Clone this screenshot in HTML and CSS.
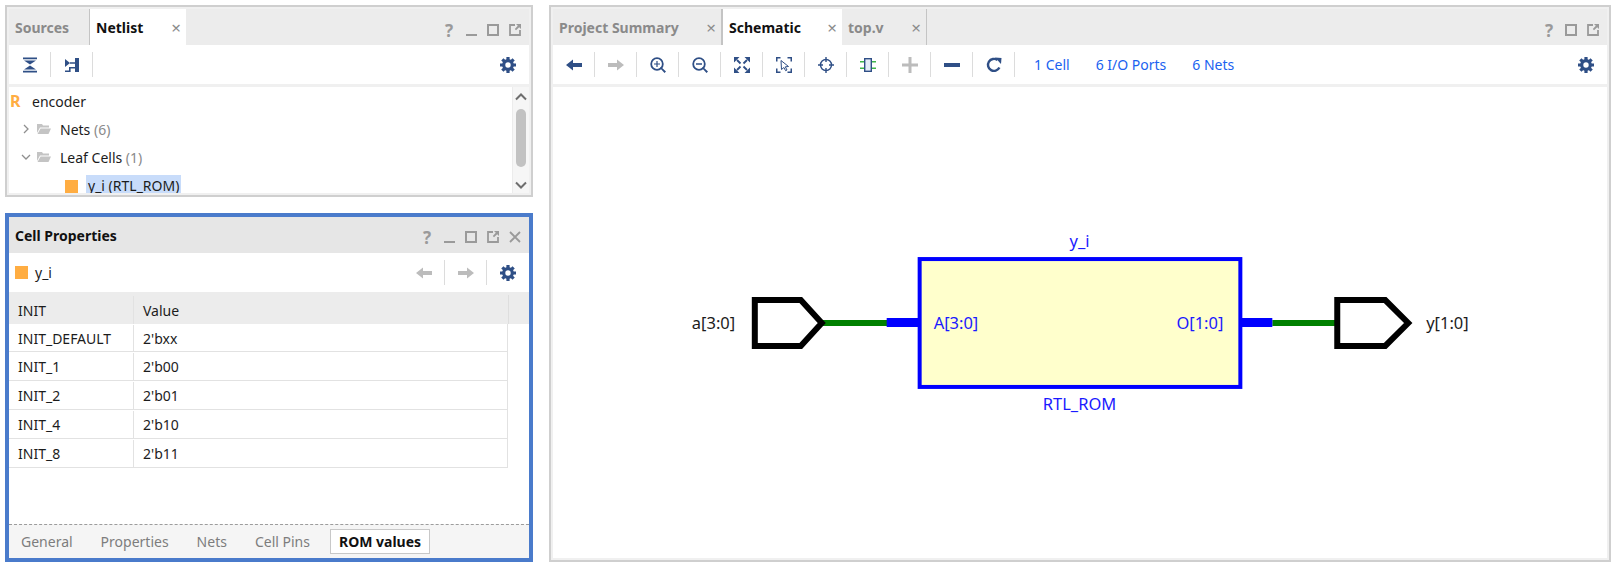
FILE: index.html
```html
<!DOCTYPE html>
<html lang="en">
<head>
    <meta charset="UTF-8">
    <title>Schematic</title>
    <link rel="stylesheet" href="styles.css">
</head>
<body>

    <svg class="defs">
        <symbol id="i-collapse" viewBox="0 0 16 16">
            <path d="M1 0.500h14v1.800H1zM2 3.400h12L8 7.600zM8 8.400l6 4.200H2zM1 13.700h14v1.800H1z"/>
        </symbol>
        <symbol id="i-connect" viewBox="0 0 16 16">
            <path d="M1 2l5 4-5 4zM11 1h4v14h-4zM6 5.200h5v1.600H6zM5 10h6v1.600H6.600V15H1v-1.600h4z"/>
        </symbol>
        <symbol id="i-gear" viewBox="0 0 16 16">
            <circle cx="8" cy="8" r="4.300" fill="none" stroke="currentColor" stroke-width="3.200"/>
            <path d="M6.400 0h3.200v3H6.400zM6.400 13h3.200v3H6.400zM0 6.400h3v3.200H0zM13 6.400h3v3.200h-3z"/>
            <path d="M6.400 0h3.200v3H6.400zM6.400 13h3.200v3H6.400zM0 6.400h3v3.200H0zM13 6.400h3v3.200h-3z" transform="rotate(45 8 8)"/>
        </symbol>
        <symbol id="i-back" viewBox="0 0 16 16">
            <path d="M0 8l7-5.500V6h9v4H7v3.500z"/>
        </symbol>
        <symbol id="i-forward" viewBox="0 0 16 16">
            <path d="M16 8L9 2.500V6H0v4h9v3.500z"/>
        </symbol>
        <symbol id="i-zoomin" viewBox="0 0 16 16">
            <circle cx="7" cy="7" r="5.800" fill="none" stroke="currentColor" stroke-width="1.800"/>
            <path d="M4 6.400h6v1.200H4zM6.400 4h1.200v6H6.400zM11 10l5 4.500-1.500 1.500-4.500-5z"/>
        </symbol>
        <symbol id="i-zoomout" viewBox="0 0 16 16">
            <circle cx="7" cy="7" r="5.800" fill="none" stroke="currentColor" stroke-width="1.800"/>
            <path d="M4 6.200h6v1.500H4zM11 10l5 4.500-1.500 1.500-4.500-5z"/>
        </symbol>
        <symbol id="i-fit" viewBox="0 0 16 16">
            <path d="M0 0h5.500L0 5.500zM16 0v5.500L10.500 0zM0 16v-5.500L5.500 16zM16 16h-5.500L16 10.500z"/>
            <path d="M3 3l3.500 3.500M13 3L9.500 6.500M3 13l3.500-3.500M13 13L9.500 9.500" fill="none" stroke="currentColor" stroke-width="1.800"/>
        </symbol>
        <symbol id="i-select" viewBox="0 0 16 16">
            <path d="M0 0h4.500v1.500h-3v3H0zM11.500 0H16v4.500h-1.500v-3h-3zM0 11.500h1.500v3h3V16H0zM14.500 11.500H16V16h-4.500v-1.500h3z"/>
            <path d="M5 3.500l7.500 6-3.200.300 1.700 3.200-1.400.700-1.700-3.200L5.500 12.500z" fill="#fff" stroke="currentColor" stroke-width="1"/>
        </symbol>
        <symbol id="i-target" viewBox="0 0 16 16">
            <circle cx="8" cy="8" r="5.500" fill="none" stroke="currentColor" stroke-width="1.400"/>
            <path d="M7.300 0h1.400v5H7.300zM7.300 11h1.400v5H7.300zM0 7.300h5v1.400H0zM11 7.300h5v1.400h-5z"/>
        </symbol>
        <symbol id="i-cell" viewBox="0 0 16 16">
            <path d="M0 4h4v1.500H0zM0 10.500h4V12H0zM12 4h4v1.500h-4zM12 10.500h4V12h-4z" fill="#3fb54a"/>
            <rect x="4.700" y="1.700" width="6.600" height="12.600" fill="#e4ecf7" stroke="currentColor" stroke-width="1.400"/>
        </symbol>
        <symbol id="i-plus" viewBox="0 0 16 16">
            <path d="M6.500 0h3v6.500H16v3H9.500V16h-3V9.500H0v-3h6.500z"/>
        </symbol>
        <symbol id="i-minus" viewBox="0 0 16 16">
            <path d="M0 6h16v4H0z"/>
        </symbol>
        <symbol id="i-refresh" viewBox="0 0 16 16">
            <path d="M13.400 10.500A6 6 0 1 1 11.500 3" fill="none" stroke="currentColor" stroke-width="2.400"/>
            <path d="M9 0.500l6.500 0.500-0.500 6z"/>
        </symbol>
        <symbol id="i-folder" viewBox="0 0 14 12">
            <path d="M0 1h5l1 1.500h6v2H3L0 10z"/>
            <path d="M3.500 5.500H14L11.500 11H0.500z"/>
        </symbol>
        <symbol id="i-max" viewBox="0 0 12 12">
            <rect x="1" y="1" width="10" height="10" fill="none" stroke="currentColor" stroke-width="2"/>
        </symbol>
        <symbol id="i-float" viewBox="0 0 12 12">
            <path d="M6 1H1v10h10V6" fill="none" stroke="currentColor" stroke-width="1.800"/>
            <path d="M7 0h5v5l-1.800-1.800L7 6.200 5.800 5l3-3.200z"/>
        </symbol>
    </svg>

    <div class="page">
        <div class="left-col">

            <div class="panel panel-netlist">
                <div class="panel-head">
                    <div class="tab tab-sources"><span>Sources</span></div>
                    <div class="tab tab-active tab-netlist"><span>Netlist</span><span class="close">&times;</span></div>
                    <div class="win-btns">
                        <span class="win-btn help">?</span>
                        <span class="win-btn"><i class="min-bar"></i></span>
                        <span class="win-btn"><svg class="win-icon"><use href="#i-max"/></svg></span>
                        <span class="win-btn"><svg class="win-icon"><use href="#i-float"/></svg></span>
                    </div>
                </div>
                <div class="toolbar">
                    <span class="tool sep"><svg class="icon"><use href="#i-collapse"/></svg></span>
                    <span class="tool sep"><svg class="icon"><use href="#i-connect"/></svg></span>
                    <span class="tool tool-end"><svg class="icon"><use href="#i-gear"/></svg></span>
                </div>
                <div class="tree-wrap">
                    <div class="tree">
                        <div class="tree-row"><span class="r-mark">R</span><span>encoder</span></div>
                        <div class="tree-row lvl1">
                            <svg class="chev" viewBox="0 0 10 10"><path d="M3 1l4 4-4 4"/></svg>
                            <svg class="folder"><use href="#i-folder"/></svg>
                            <span>Nets <em>(6)</em></span>
                        </div>
                        <div class="tree-row lvl1">
                            <svg class="chev" viewBox="0 0 10 10"><path d="M1 3l4 4 4-4"/></svg>
                            <svg class="folder"><use href="#i-folder"/></svg>
                            <span>Leaf Cells <em>(1)</em></span>
                        </div>
                        <div class="tree-row lvl2">
                            <i class="cell-mark"></i>
                            <span class="selected">y_i (RTL_ROM)</span>
                        </div>
                    </div>
                    <div class="scrollbar">
                        <svg class="sb-arrow" viewBox="0 0 12 8"><path d="M1 6.500l5-5 5 5"/></svg>
                        <div class="sb-thumb"></div>
                        <svg class="sb-arrow sb-down" viewBox="0 0 12 8"><path d="M1 1.500l5 5 5-5"/></svg>
                    </div>
                </div>
            </div>

            <div class="panel-props">
                <div class="panel-head props-head">
                    <span class="props-title">Cell Properties</span>
                    <div class="win-btns">
                        <span class="win-btn help">?</span>
                        <span class="win-btn"><i class="min-bar"></i></span>
                        <span class="win-btn"><svg class="win-icon"><use href="#i-max"/></svg></span>
                        <span class="win-btn"><svg class="win-icon"><use href="#i-float"/></svg></span>
                        <span class="win-btn"><svg class="win-icon" viewBox="0 0 12 12"><path class="x-line" d="M1 1l10 10M11 1L1 11"/></svg></span>
                    </div>
                </div>
                <div class="toolbar props-bar">
                    <i class="cell-mark"></i>
                    <span class="props-name">y_i</span>
                    <span class="tool sep off tool-end"><svg class="icon"><use href="#i-back"/></svg></span>
                    <span class="tool sep off"><svg class="icon"><use href="#i-forward"/></svg></span>
                    <span class="tool"><svg class="icon"><use href="#i-gear"/></svg></span>
                </div>
                <div class="table">
                    <div class="tr th"><span class="td td-name">INIT</span><span class="td">Value</span></div>
                    <div class="tr tr-first"><span class="td td-name">INIT_DEFAULT</span><span class="td">2'bxx</span></div>
                    <div class="tr"><span class="td td-name">INIT_1</span><span class="td">2'b00</span></div>
                    <div class="tr"><span class="td td-name">INIT_2</span><span class="td">2'b01</span></div>
                    <div class="tr"><span class="td td-name">INIT_4</span><span class="td">2'b10</span></div>
                    <div class="tr"><span class="td td-name">INIT_8</span><span class="td">2'b11</span></div>
                </div>
                <div class="bottom-tabs">
                    <span class="btab">General</span>
                    <span class="btab">Properties</span>
                    <span class="btab">Nets</span>
                    <span class="btab">Cell Pins</span>
                    <span class="btab btab-active">ROM values</span>
                </div>
            </div>

        </div>

        <div class="panel panel-schematic">
            <div class="panel-head">
                <div class="tab tab-summary"><span>Project Summary</span><span class="close">&times;</span></div>
                <div class="tab tab-active tab-schematic"><span>Schematic</span><span class="close">&times;</span></div>
                <div class="tab tab-top"><span>top.v</span><span class="close">&times;</span></div>
                <div class="win-btns">
                    <span class="win-btn help">?</span>
                    <span class="win-btn"><svg class="win-icon"><use href="#i-max"/></svg></span>
                    <span class="win-btn"><svg class="win-icon"><use href="#i-float"/></svg></span>
                </div>
            </div>
            <div class="toolbar">
                <span class="tool sep"><svg class="icon"><use href="#i-back"/></svg></span>
                <span class="tool sep off"><svg class="icon"><use href="#i-forward"/></svg></span>
                <span class="tool sep"><svg class="icon"><use href="#i-zoomin"/></svg></span>
                <span class="tool sep"><svg class="icon"><use href="#i-zoomout"/></svg></span>
                <span class="tool sep"><svg class="icon"><use href="#i-fit"/></svg></span>
                <span class="tool sep"><svg class="icon"><use href="#i-select"/></svg></span>
                <span class="tool sep"><svg class="icon"><use href="#i-target"/></svg></span>
                <span class="tool sep"><svg class="icon"><use href="#i-cell"/></svg></span>
                <span class="tool sep off"><svg class="icon"><use href="#i-plus"/></svg></span>
                <span class="tool sep"><svg class="icon"><use href="#i-minus"/></svg></span>
                <span class="tool sep"><svg class="icon"><use href="#i-refresh"/></svg></span>
                <div class="links">
                    <a class="link">1 Cell</a>
                    <a class="link">6 I/O Ports</a>
                    <a class="link">6 Nets</a>
                </div>
                <span class="tool tool-end"><svg class="icon"><use href="#i-gear"/></svg></span>
            </div>
            <div class="canvas">
                <svg class="schematic" viewBox="553 87 1055 471">
                    <rect class="cell-box" x="920" y="259" width="321" height="128"/>
                    <rect class="wire" x="823" y="320" width="65" height="6"/>
                    <rect class="wire" x="1273" y="320" width="65" height="6"/>
                    <rect class="stub" x="887" y="318" width="32" height="9"/>
                    <rect class="stub" x="1240" y="318" width="33" height="9"/>
                    <path class="port" d="M755 300H801L822 323L801 346H755Z"/>
                    <path class="port" d="M1338 300H1386L1409 323L1386 346H1338Z"/>
                    <text class="net-label" x="692" y="329">a[3:0]</text>
                    <text class="net-label" x="1427" y="329">y[1:0]</text>
                    <text class="pin-label" x="934" y="329">A[3:0]</text>
                    <text class="pin-label" x="1224" y="329" text-anchor="end">O[1:0]</text>
                    <text class="pin-label" x="1080" y="247" text-anchor="middle">y_i</text>
                    <text class="pin-label" x="1080" y="410" text-anchor="middle">RTL_ROM</text>
                </svg>
            </div>
        </div>
    </div>

</body>
</html>
```

FILE: styles.css
```css
* {
    box-sizing: border-box;
}
html, body {
    margin: 0;
    height: 100%;
}
body {
    font-family: "Noto Sans", "Open Sans", sans-serif;
    font-size: 14px;
    color: #1c1c1c;
    background: #fff;
    overflow: hidden;
}
.defs {
    display: none;
}
.page {
    display: flex;
    gap: 16px;
    padding: 5px 9px 7px 5px;
    height: 569px;
}
.left-col {
    display: flex;
    flex-direction: column;
    gap: 16px;
    width: 528px;
}

/* panels */
.panel {
    display: flex;
    flex-direction: column;
    border: 2px solid #cfcfcf;
    padding: 2px;
    background: #f0f0f0;
}
.panel-netlist {
    height: 192px;
}
.panel-schematic {
    flex: 1;
}
.panel-props {
    display: flex;
    flex-direction: column;
    flex: 1;
    border: 4px solid #4a7bcb;
    background: #fff;
}
.panel-head {
    display: flex;
    align-items: stretch;
    flex: none;
    height: 36px;
    background: #ececec;
}
.props-head {
    align-items: center;
    background: #e6e6e6;
    padding-left: 6px;
}
.props-title {
    font-weight: 700;
    color: #111;
}

/* tabs */
.tab {
    display: flex;
    align-items: center;
    justify-content: space-between;
    padding: 0 5px 0 6px;
    font-weight: 700;
    color: #8a8a8a;
}
.tab-active {
    background: #fff;
    color: #111;
    border-left: 1px solid #c4c4c4;
    padding-left: 6px;
}
.tab-sources { width: 80px; }
.tab-netlist { width: 97px; }
.tab-summary { width: 168px; }
.tab-schematic { width: 121px; border-left: 2px solid #c4c4c4; padding-left: 6px; }
.tab-top { width: 85px; border-right: 1px solid #c4c4c4; }
.close {
    font-size: 17px;
    font-weight: 400;
    color: #8c8c8c;
}
.win-btns {
    display: flex;
    align-items: center;
    margin-left: auto;
    padding: 6px 3px 0 0;
}
.props-head .win-btns {
    padding-top: 4px;
}
.win-btn {
    display: flex;
    align-items: center;
    justify-content: center;
    width: 22px;
    height: 20px;
    color: #9a9a9a;
}
.help {
    font-size: 17px;
    font-weight: 700;
}
.win-icon {
    width: 12px;
    height: 12px;
}
.win-icon use, .icon use {
    fill: currentColor;
}
.min-bar {
    width: 11px;
    height: 2px;
    margin-top: 9px;
    background: #9a9a9a;
}
.x-line {
    fill: none;
    stroke: currentColor;
    stroke-width: 1.8;
}

/* toolbars */
.toolbar {
    display: flex;
    align-items: center;
    flex: none;
    height: 39px;
    background: #fff;
    color: #2f4f86;
}
.tool {
    display: flex;
    align-items: center;
    justify-content: center;
    flex: none;
    width: 42px;
    height: 25px;
}
.sep {
    border-right: 1px solid #dcdcdc;
}
.tool.off {
    color: #bcbcbc;
}
.tool-end {
    margin-left: auto;
}
.icon {
    width: 16px;
    height: 16px;
}
.links {
    display: flex;
    gap: 26px;
    padding-left: 19px;
}
.link {
    color: #1a62f0;
}
.props-bar {
    padding-left: 6px;
}
.props-name {
    margin-left: 7px;
    color: #1c1c1c;
}

/* tree */
.tree-wrap {
    display: flex;
    flex: 1;
    min-height: 0;
    margin-top: 3px;
    background: #fff;
}
.tree {
    flex: 1;
    overflow: hidden;
}
.tree-row {
    display: flex;
    align-items: center;
    height: 28px;
    white-space: nowrap;
}
.tree-row em {
    font-style: normal;
    color: #8a8a8a;
}
.r-mark {
    width: 23px;
    padding-left: 1px;
    font-size: 16px;
    font-weight: 700;
    color: #ffad42;
}
.lvl1 {
    padding-left: 12px;
}
.lvl2 {
    padding-left: 56px;
}
.chev {
    width: 10px;
    height: 10px;
    margin-right: 6px;
    fill: none;
    stroke: #8f8f8f;
    stroke-width: 1.3;
}
.folder {
    width: 14px;
    height: 12px;
    margin-right: 9px;
    fill: #c4c4c4;
}
.cell-mark {
    flex: none;
    width: 13px;
    height: 13px;
    background: #ffad42;
}
.lvl2 .cell-mark {
    margin-top: 2px;
}
.selected {
    display: flex;
    align-items: center;
    height: 22px;
    margin: 1px 0 0 8px;
    padding: 0 2px;
    background: #c8dcfa;
}
.scrollbar {
    display: flex;
    flex-direction: column;
    align-items: center;
    flex: none;
    width: 17px;
    background: #f6f6f6;
    border-left: 1px solid #ececec;
}
.sb-arrow {
    flex: none;
    width: 12px;
    height: 8px;
    margin-top: 6px;
    fill: none;
    stroke: #6e6e6e;
    stroke-width: 2;
}
.sb-down {
    margin-top: auto;
    margin-bottom: 4px;
}
.sb-thumb {
    flex: none;
    width: 10px;
    height: 58px;
    margin-top: 8px;
    border-radius: 5px;
    background: #c2c2c2;
}

/* properties table */
.table {
    flex: 1;
    border-top: 3px solid #ececec;
}
.tr {
    display: flex;
    align-items: center;
    width: 499px;
    height: 29px;
    padding-top: 1px;
    border-bottom: 1px solid #e2e2e2;
    border-right: 1px solid #e2e2e2;
}
.tr-first {
    height: 28px;
}
.th {
    width: auto;
    background: #ececec;
    border-bottom: 0;
    border-right: 0;
    background-image: linear-gradient(#dedede, #dedede);
    background-size: 1px 100%;
    background-position: 499px 0;
    background-repeat: no-repeat;
}
.td {
    display: flex;
    align-items: center;
    height: 100%;
    padding-left: 9px;
}
.td-name {
    flex: none;
    width: 125px;
    border-right: 1px solid #e2e2e2;
}
.bottom-tabs {
    display: flex;
    align-items: center;
    flex: none;
    height: 34px;
    padding-left: 12px;
    background: #f5f5f5;
    border-top: 1px dashed #9c9c9c;
}
.btab {
    margin-right: 28px;
    color: #7d7d7d;
}
.btab-active {
    display: flex;
    align-items: center;
    height: 25px;
    margin: 0 0 0 -8px;
    padding: 0 8px;
    background: #fff;
    border: 1px solid #c8c8c8;
    font-weight: 700;
    color: #111;
}

/* schematic */
.canvas {
    flex: 1;
    min-height: 0;
    margin-top: 3px;
    background: #fff;
}
.schematic {
    display: block;
    width: 100%;
    height: 100%;
}
.cell-box {
    fill: #ffffcc;
    stroke: #0000ff;
    stroke-width: 4;
}
.wire {
    fill: #008000;
}
.stub {
    fill: #0000ff;
}
.port {
    fill: #fff;
    stroke: #000;
    stroke-width: 6;
}
.net-label {
    font-size: 16.500px;
    fill: #1c1c1c;
}
.pin-label {
    font-size: 16.500px;
    fill: #1a1aff;
}
```
